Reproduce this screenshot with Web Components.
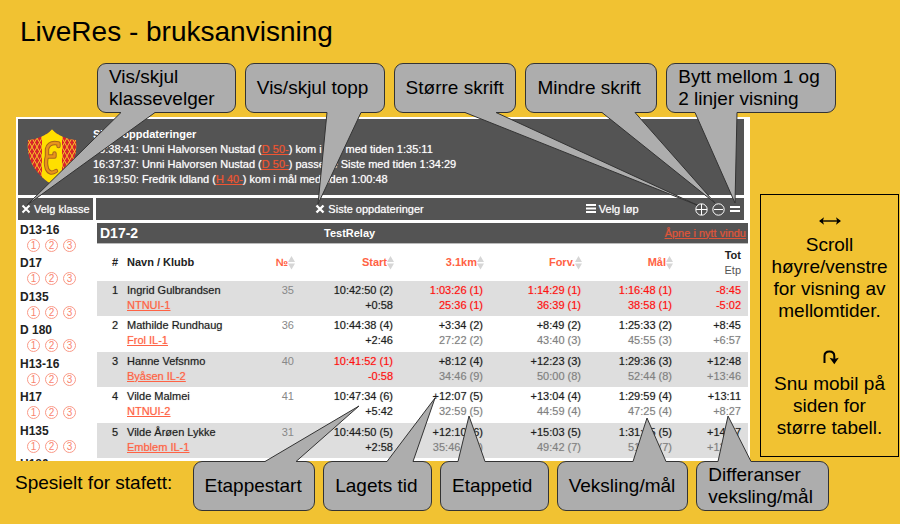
<!DOCTYPE html>
<html lang="no">
<head>
<meta charset="utf-8">
<title>LiveRes - bruksanvisning</title>
<style>
  body { margin: 0; background: #f1c232; color: #000; font-family: "Liberation Sans", Arial, sans-serif; }
</style>
</head>
<body>
<guide-slide></guide-slide>

<template id="t-guide-slide">
  <style>
    :host { display: block; font-size: 19px; line-height: 22px; }
    h1 { margin: 0; padding: 15px 20px; font-size: 28px; line-height: 33px; font-weight: 400; }
    .top { display: grid; grid-template-columns: 139fr 140fr 123fr 132fr 170fr; gap: 9px; padding: 0 64px 4px 97px; position: relative; z-index: 2; }
    .middle { display: grid; grid-template-columns: 1fr 139px; gap: 10px; padding: 0 1px 0 16px; align-items: end; }
    .bottom { display: grid; grid-template-columns: 170fr 123fr 109fr 109fr 132fr 133fr; gap: 8px; padding: 0 71px 12px 15px; position: relative; z-index: 2; }
    .bottom p { margin: 0; align-self: center; padding-bottom: 7px; white-space: nowrap; }
  </style>
  <h1>LiveRes - bruksanvisning</h1>
  <div class="top">
    <call-out tail="24 58 -70 142">Vis/skjul<br>klassevelger</call-out>
    <call-out tail="82 116 73 141">Vis/skjul topp</call-out>
    <call-out tail="71 102 303 142">Større skrift</call-out>
    <call-out tail="77 110 190 140">Mindre skrift</call-out>
    <call-out tail="29 71 69 140">Bytt mellom 1 og<br>2 linjer visning</call-out>
  </div>
  <div class="middle">
    <live-app></live-app>
    <tip-box></tip-box>
  </div>
  <div class="bottom">
    <p>Spesielt for stafett:</p>
    <call-out tail="72 103 166 -55">Etappestart</call-out>
    <call-out tail="64 90 112 -63">Lagets tid</call-out>
    <call-out tail="18 45 29 -45">Etappetid</call-out>
    <call-out tail="76 109 90 -43">Veksling/mål</call-out>
    <call-out tail="22 55 32 -45">Differanser<br>veksling/mål</call-out>
  </div>
</template>

<template id="t-call-out">
  <style>
    :host { display: flex; align-items: center; box-sizing: border-box; min-height: 50px; padding: 2px 0 2px 11px;
      background: #adadad; border: 1px solid #333; border-radius: 9px; position: relative; white-space: nowrap; min-width: 0; }
    svg { position: absolute; left: -1px; top: -1px; width: 1px; height: 1px; overflow: visible; pointer-events: none; }
    .fill { fill: #adadad; }
    .edge { fill: none; stroke: #333; stroke-linejoin: bevel; }
    span { position: relative; z-index: 1; }
  </style>
  <svg aria-hidden="true"><path class="fill"/><path class="edge"/></svg>
  <span><slot></slot></span>
</template>

<template id="t-tip-box">
  <style>
    :host { display: block; border: 1px solid #000; margin-bottom: 4px; padding: 13px 0 17px; text-align: center; white-space: nowrap; }
    p { margin: 0; }
    p + .icon { margin-top: 22px; }
    .icon { display: grid; place-items: center; height: 26px; }
    .turn { height: 29px; align-items: start; }
    .turn svg { margin-top: 5px; }
    svg { display: block; fill: none; stroke: #000; }
  </style>
  <div class="icon"><svg width="24" height="10" viewBox="0 0 24 10" stroke-width="1.4"><path d="M2 5H22"/><path d="M6 1.2L1 5L6 8.8L4.8 5ZM18 1.2L23 5L18 8.8L19.200 5Z" fill="#000" stroke="none"/></svg></div>
  <p>Scroll<br>høyre/venstre<br>for visning av<br>mellomtider.</p>
  <div class="icon turn"><svg width="18" height="16" viewBox="0 0 18 16" stroke-width="2"><path d="M3.500 14V7Q3.500 2.500 8.500 2.500Q13.300 2.500 13.300 7V10"/><path d="M8.600 8.800L13.300 10L17.800 8.800L13.300 15.200Z" fill="#000" stroke="none"/></svg></div>
  <p>Snu mobil på<br>siden for<br>større tabell.</p>
</template>

<template id="t-live-app">
  <style>
    :host { display: block; background: #fff; padding: 2px 2px 3px; font-size: 11px; line-height: 15px; }
    .content { display: grid; grid-template-columns: 75px minmax(0, 1fr); column-gap: 3px; margin-top: 3px; }
    result-table { margin-left: 1px; }
  </style>
  <news-panel></news-panel>
  <tool-bar></tool-bar>
  <div class="content">
    <class-list></class-list>
    <result-table></result-table>
  </div>
</template>

<template id="t-news-panel">
  <style>
    :host { display: flex; align-items: center; gap: 16px; margin-right: 4px; padding: 8px 8px 8px 9px; background: #545454; color: #fff; }
    svg { display: block; flex: none; }
    .lines { text-shadow: 0 0 1px #fffa; }
    a { color: #ee5533; text-shadow: 0 0 1px #ee553399; }
    b { display: block; text-shadow: none; }
    div > div { white-space: nowrap; }
  </style>
  <svg width="50" height="56" viewBox="0 0 50 56" role="img" aria-label="Klubblogo">
    <defs>
      <pattern id="d" width="5" height="9" patternUnits="userSpaceOnUse">
        <rect width="5" height="9" fill="#d8232a"/><path d="M0 0L5 9M5 0L0 9" fill="none" stroke="#f5c52a" stroke-width="1"/>
      </pattern>
      <clipPath id="s"><path d="M25 0.500Q18 9 1 11Q-1 27 8 40Q14 49 25 55.500Q36 49 42 40Q51 27 49 11Q32 9 25 0.500Z"/></clipPath>
    </defs>
    <g clip-path="url(#s)"><rect width="50" height="56" fill="url(#d)"/><rect x="15" width="20" height="56" fill="#ffdf00"/></g>
    <g fill="none" stroke-linecap="round" stroke-linejoin="round">
      <path d="M31.500 17V14.500Q22 12.500 20 20V27Q18 34 20 40Q23 46 29 42M20.500 27.500H27.500V24.500" stroke="#a8641c" stroke-width="4.400"/>
      <path d="M31.500 17V14.500Q22 12.500 20 20V27Q18 34 20 40Q23 46 29 42M20.500 27.500H27.500V24.500" stroke="#e8941a" stroke-width="2.400"/>
    </g>
  </svg>
  <div class="lines">
    <b>Siste oppdateringer</b>
    <div>16:38:41: Unni Halvorsen Nustad (<a href="#d50">D 50-</a>) kom i mål med tiden 1:35:11</div>
    <div>16:37:37: Unni Halvorsen Nustad (<a href="#d50">D 50-</a>) passerte Siste med tiden 1:34:29</div>
    <div>16:19:50: Fredrik Idland (<a href="#h40">H 40-</a>) kom i mål med tiden 1:00:48</div>
  </div>
</template>

<template id="t-tool-bar">
  <style>
    :host { display: grid; grid-template-columns: 75px minmax(0, 1fr); gap: 3px; margin: 3px 4px 0 0; }
    .cell { background: #545454; height: 22px; align-items: center; display: grid; }
    .left { padding-left: 3px; }
    .right { grid-template-columns: 219fr 270fr 109fr auto; padding-right: 3px; }
    button { all: unset; display: flex; align-items: center; gap: 3px; color: #fff; white-space: nowrap; cursor: pointer; text-shadow: 0 0 1px #fffa; }
    .icons { display: flex; gap: 4px; }
    svg { display: block; fill: none; stroke: #fff; }
  </style>
  <div class="cell left"><button><svg width="10" height="10" viewBox="0 0 10 10" stroke-width="2"><path d="M1.500 1.500L8.500 8.500M8.500 1.500L1.500 8.500"/></svg>Velg klasse</button></div>
  <div class="cell right">
    <span></span>
    <button><svg width="10" height="10" viewBox="0 0 10 10" stroke-width="2.400"><path d="M1.500 1.500L8.500 8.500M8.500 1.500L1.500 8.500"/></svg>Siste oppdateringer</button>
    <button><svg width="10" height="10" viewBox="0 0 10 10"><path d="M0 1H10M0 4.500H10M0 8H10" stroke-width="2"/></svg>Velg løp</button>
    <div class="icons">
      <button aria-label="Større skrift"><svg width="13" height="13" viewBox="0 0 13 13"><circle cx="6.500" cy="6.500" r="5.700"/><path d="M6.500 1V12M1 6.500H12"/></svg></button>
      <button aria-label="Mindre skrift"><svg width="13" height="13" viewBox="0 0 13 13"><circle cx="6.500" cy="6.500" r="5.700"/><path d="M2 6.500H11"/></svg></button>
      <button aria-label="Bytt linjevisning"><svg width="12" height="13" viewBox="0 0 12 13" stroke-width="2"><path d="M1 4H11M1 8H11"/></svg></button>
    </div>
  </div>
</template>

<template id="t-class-list">
  <style>
    :host { display: block; height: 0; min-height: 100%; position: relative; }
    nav { position: absolute; inset: 0 0 -3px; overflow: hidden; }
    section { height: 33px; padding-left: 2px; }
    section:nth-child(even) { height: 34px; }
    h2 { margin: 0; font-size: 12px; line-height: 14px; color: #222; }
    div { display: flex; gap: 5px; padding: 2px 0 0 7px; }
    a { box-sizing: border-box; width: 13px; height: 13px; border: 1px solid #fa9a88; border-radius: 50%; color: #f98570;
      font-size: 10px; line-height: 11px; text-align: center; text-decoration: none; }
  </style>
  <nav aria-label="Klasser"></nav>
</template>

<template id="t-result-table">
  <style>
    :host { display: block; color: #1c1c1c; }
    header { display: grid; grid-template-columns: 224px 1fr auto; align-items: center; height: 20px; padding: 0 2px 0 3px;
      background: #545454; border-bottom: 1px solid #bbb; color: #fff; font-weight: 700; }
    h2 { margin: 0; font-size: 14px; line-height: 20px; }
    header a { color: #e0553a; font-weight: 400; text-shadow: 0 0 1px #e0553a99; }
    table { width: 100%; border-collapse: collapse; table-layout: fixed; }
    th, td { padding: 0 6px 0 0; text-align: right; white-space: nowrap; vertical-align: top; }
    th { height: 37px; vertical-align: middle; color: #222; }
    td { padding-top: 2px; padding-bottom: 3px; text-shadow: 0 0 1px #0006; }
    tr:nth-child(even) td { padding-bottom: 4px; }
    th:nth-child(2), td:nth-child(2) { text-align: left; padding-left: 3px; }
    th:last-child, td:last-child { padding-right: 7px; }
    tbody tr:nth-child(odd) { background: #dedede; }
    td a, th button { color: #ff6244; }
    td a { text-shadow: 0 0 1px #ff624488; }
    td:nth-child(3) { color: #888; text-shadow: none; }
    small { font-size: 11px; font-weight: 400; color: #555; }
    .dim { color: #808080; text-shadow: 0 0 1px #8886; }
    .red { color: #ff1111; text-shadow: 0 0 1px #f006; }
    button { all: unset; display: inline-flex; align-items: center; margin-right: -1px; cursor: pointer; font-weight: 700; }
    svg { display: block; fill: #d6d6d6; }
  </style>
  <header><h2>D17-2</h2><span>TestRelay</span><a href="#nytt">Åpne i nytt vindu</a></header>
  <table>
    <colgroup><col style="width:27px"><col><col style="width:30px"><col style="width:99px"><col style="width:90px"><col style="width:98px"><col style="width:91px"><col style="width:70px"></colgroup>
    <thead><tr></tr></thead>
    <tbody></tbody>
  </table>
</template>

<script>
  class TemplateElement extends HTMLElement {
    connectedCallback() {
      if (this.shadowRoot) return;
      const root = this.attachShadow({ mode: 'open' });
      root.append(document.getElementById('t-' + this.localName).content.cloneNode(true));
      this.render(root);
    }
    render() {}
  }

  class CallOut extends TemplateElement {
    render(root) {
      const [x1, x2, tx, ty] = this.getAttribute('tail').split(' ').map(Number);
      const up = ty < 0;
      const h = this.offsetHeight;
      const edge = up ? 0.5 : h - 0.5, inner = up ? 2 : h - 2;
      root.querySelector('.fill').setAttribute('d', `M${x1} ${inner}L${x1} ${edge}L${tx} ${ty}L${x2} ${edge}L${x2} ${inner}Z`);
      root.querySelector('.edge').setAttribute('d', `M${x1} ${edge}L${tx} ${ty}L${x2} ${edge}`);
    }
  }

  class ClassList extends TemplateElement {
    render(root) {
      const legs = '<div>' + [1, 2, 3].map(i => `<a href="#leg${i}">${i}</a>`).join('') + '</div>';
      root.querySelector('nav').innerHTML = ['D13-16', 'D17', 'D135', 'D 180', 'H13-16', 'H17', 'H135']
        .map(n => `<section><h2>${n}</h2>${legs}</section>`).join('') + '<section><h2>H180</h2></section>';
    }
  }

  class ResultTable extends TemplateElement {
    render(root) {
      const arrows = '<svg width="7" height="15" viewBox="0 0 7 15"><path d="M0 7L3.500 1L7 7ZM0 8.500H7L3.500 14.500Z"/></svg>';
      root.querySelector('thead tr').innerHTML = '<th>#</th><th>Navn / Klubb</th>' +
        ['№', 'Start', '3.1km', 'Forv.', 'Mål'].map(t => `<th><button>${t}${arrows}</button></th>`).join('') +
        '<th>Tot<br><small>Etp</small></th>';
      const rows = [
        ['Ingrid Gulbrandsen', 'NTNUI-1', 35, '10:42:50 (2)', '+0:58', '1:03:26 (1)', '25:36 (1)', '1:14:29 (1)', '36:39 (1)', '1:16:48 (1)', '38:58 (1)', '-8:45', '-5:02'],
        ['Mathilde Rundhaug', 'Frol IL-1', 36, '10:44:38 (4)', '+2:46', '+3:34 (2)', '27:22 (2)', '+8:49 (2)', '43:40 (3)', '1:25:33 (2)', '45:55 (3)', '+8:45', '+6:57'],
        ['Hanne Vefsnmo', 'Byåsen IL-2', 40, '10:41:52 (1)', '-0:58', '+8:12 (4)', '34:46 (9)', '+12:23 (3)', '50:00 (8)', '1:29:36 (3)', '52:44 (8)', '+12:48', '+13:46'],
        ['Vilde Malmei', 'NTNUI-2', 41, '10:47:34 (6)', '+5:42', '+12:07 (5)', '32:59 (5)', '+13:04 (4)', '44:59 (4)', '1:29:59 (4)', '47:25 (4)', '+13:11', '+8:27'],
        ['Vilde Årøen Lykke', 'Emblem IL-1', 31, '10:44:50 (5)', '+2:58', '+12:10 (6)', '35:46 (10)', '+15:03 (5)', '49:42 (7)', '1:31:45 (5)', '51:55 (7)', '+14:57', '+12:57']
      ];
      const best = t => t.includes('(1)') || t.startsWith('-');
      const pair = (a, b, dim) => `<td><span class="${best(a) ? 'red' : ''}">${a}</span><br><span class="${best(b) ? 'red' : dim}">${b}</span></td>`;
      root.querySelector('tbody').innerHTML = rows.map((r, i) => `<tr><td>${i + 1}</td><td>${r[0]}<br><a href="#klubb">${r[1]}</a></td><td>${r[2]}</td>` +
        pair(r[3], r[4], '') + pair(r[5], r[6], 'dim') + pair(r[7], r[8], 'dim') + pair(r[9], r[10], 'dim') + pair(r[11], r[12], 'dim') + '</tr>').join('');
    }
  }

  customElements.define('guide-slide', class extends TemplateElement {});
  customElements.define('tip-box', class extends TemplateElement {});
  customElements.define('live-app', class extends TemplateElement {});
  customElements.define('news-panel', class extends TemplateElement {});
  customElements.define('tool-bar', class extends TemplateElement {});
  customElements.define('class-list', ClassList);
  customElements.define('result-table', ResultTable);
  customElements.define('call-out', CallOut);
</script>
</body>
</html>
